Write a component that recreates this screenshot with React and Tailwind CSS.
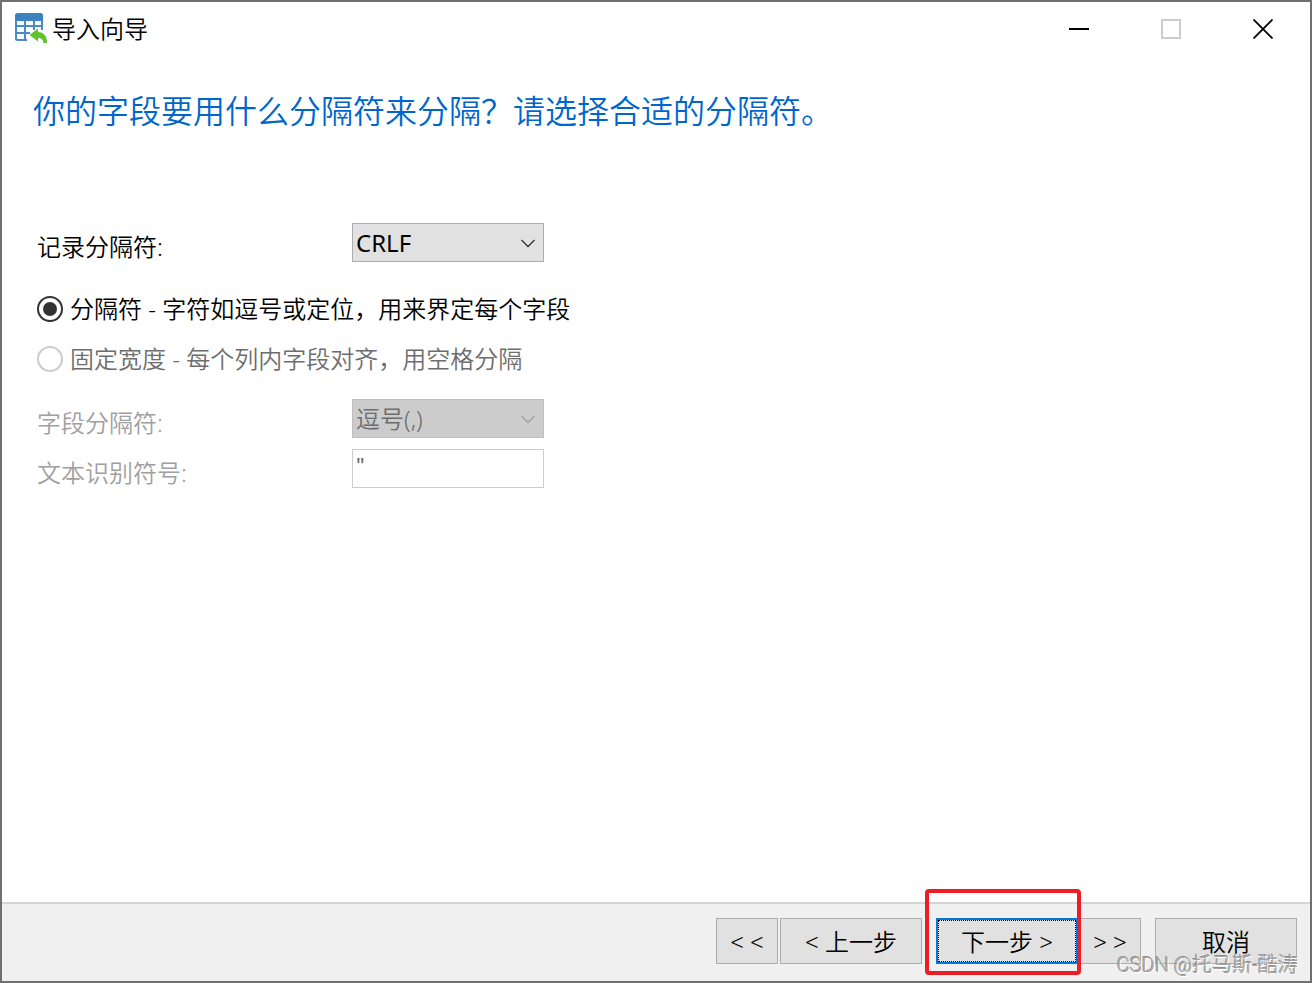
import React, { useState } from "react";

const TableImportIcon = () => (
  <svg width="32" height="32" viewBox="0 0 32 32" aria-hidden="true">
    <path d="M0 8V2.500Q0 0 2.500 0H25.500Q28 0 28 2.500V8Z" fill="#3c82c0" />
    <path
      d="M1 7V25.500Q1 27 2.500 27H12M27 7V17M10 7V27M19 7V17M1 13H27M1 20H15"
      fill="none"
      stroke="#4a8cc8"
      strokeWidth="2"
    />
    <path
      d="M14.500 22L23 15.500V19C29 19 32 23 32 30H28.500C28 26.500 26.500 25 23 25V28.500Z"
      fill="#62c22c"
    />
  </svg>
);

const Chevron = ({ className }) => (
  <svg
    className={`absolute right-2 top-4 pointer-events-none ${className}`}
    width="16"
    height="9"
    viewBox="0 0 16 9"
    fill="none"
    stroke="currentColor"
    strokeWidth="1.300"
    aria-hidden="true"
  >
    <path d="M1.500 1L8 7.500L14.500 1" />
  </svg>
);

const captionButton = "w-[92px] h-full flex items-center justify-center";
const wizardButton =
  "h-[46px] border border-[#adadad] bg-[#e1e1e1] pt-0.5 flex items-center justify-center whitespace-pre";

const App = () => {
  const [recordDelimiter, setRecordDelimiter] = useState("CRLF");
  const [mode, setMode] = useState("delimited");
  const locked = true;

  return (
    <div className="relative min-h-screen flex flex-col border-2 border-[#707070] bg-white text-black text-2xl leading-[30px] font-['Noto_Sans','Noto_Sans_CJK_SC',sans-serif] font-[350]">
      <header className="h-[54px] flex items-center pl-[13px] pr-px">
        <TableImportIcon />
        <h1 className="pl-[5px] grow">导入向导</h1>
        <button type="button" aria-label="最小化" className={captionButton}>
          <span className="w-5 h-0.5 bg-black" />
        </button>
        <button type="button" aria-label="最大化" disabled className={captionButton}>
          <span className="w-5 h-5 border-2 border-[#cccccc]" />
        </button>
        <button type="button" aria-label="关闭" className={captionButton}>
          <svg width="20" height="20" viewBox="0 0 20 20" stroke="#000" strokeWidth="1.800" aria-hidden="true">
            <path d="M0.500 0.500L19.500 19.500M19.500 0.500L0.500 19.500" />
          </svg>
        </button>
      </header>

      <main className="grow px-[35px] pt-[35px]">
        <h2 className="-ml-1 h-10 text-[32px] leading-10 text-[#0066cc]">
          你的字段要用什么分隔符来分隔？请选择合适的分隔符。
        </h2>

        <div className="mt-[92px] flex items-end">
          <label htmlFor="record" className="w-[315px]">记录分隔符:</label>
          <div className="relative w-48">
            <select
              id="record"
              value={recordDelimiter}
              onChange={(e) => setRecordDelimiter(e.target.value)}
              className="block w-full h-[39px] pl-[3px] appearance-none rounded-none border border-[#adadad] bg-[#e1e1e1] font-normal"
            >
              <option>CRLF</option>
            </select>
            <Chevron className="text-[#333333]" />
          </div>
        </div>

        <div className="mt-[22px] mb-[15px]">
          <label className="h-[50px] flex items-center gap-[7px]">
            <input
              type="radio"
              name="mode"
              checked={mode === "delimited"}
              onChange={() => setMode("delimited")}
              className="appearance-none w-[26px] h-[26px] rounded-full border-2 border-[#333333] bg-white p-1 bg-clip-content checked:bg-[#333333]"
            />
            分隔符 - 字符如逗号或定位，用来界定每个字段
          </label>
          <label className="h-[50px] flex items-center gap-[7px] text-[#6d6d6d]">
            <input
              type="radio"
              name="mode"
              disabled={locked}
              checked={mode === "fixed"}
              onChange={() => setMode("fixed")}
              className="appearance-none w-[26px] h-[26px] rounded-full border-2 border-[#cccccc] bg-white"
            />
            固定宽度 - 每个列内字段对齐，用空格分隔
          </label>
        </div>

        <div className="flex items-end text-[#a0a0a0]">
          <label htmlFor="field" className="w-[315px]">字段分隔符:</label>
          <div className="relative w-48">
            <select
              id="field"
              disabled={locked}
              className="block w-full h-[39px] pl-[3px] appearance-none rounded-none border border-[#bfbfbf] bg-[#cccccc] text-[#6d6d6d] opacity-100"
            >
              <option>逗号(,)</option>
            </select>
            <Chevron className="text-[#a0a0a0]" />
          </div>
        </div>

        <div className="mt-[11px] flex items-end text-[#a0a0a0]">
          <label htmlFor="qualifier" className="w-[315px]">文本识别符号:</label>
          <input
            id="qualifier"
            type="text"
            disabled={locked}
            defaultValue={'"'}
            className="w-48 h-[39px] px-[3px] pb-2 border border-[#cccccc] bg-white text-xl font-medium text-[#6d6d6d]"
          />
        </div>
      </main>

      <footer className="flex justify-end border-t-2 border-[#d5d5d5] bg-[#f0f0f0] pt-3.5 pb-[17px] pr-[13px]">
        <button type="button" className={`${wizardButton} w-[62px] mr-0.5`}>{"< <"}</button>
        <button type="button" className={`${wizardButton} w-[142px] mr-3.5`}>{"< 上一步"}</button>
        <div className="relative mr-px">
          <button
            type="button"
            className="w-[142px] h-[46px] border-2 border-[#0078d7] bg-[#e1e1e1] flex"
          >
            <span className="grow self-stretch pt-0.5 border border-dotted border-black flex items-center justify-center whitespace-pre">
              {"下一步 >"}
            </span>
          </button>
          <div className="absolute z-10 -top-[29px] -bottom-[11px] -left-[11px] -right-[3px] rounded-sm border-4 border-[#ee1c25] pointer-events-none" />
        </div>
        <button type="button" className={`${wizardButton} w-[62px] mr-3.5`}>{"> >"}</button>
        <button type="button" className={`${wizardButton} w-[142px]`}>取消</button>
      </footer>

      <div className="absolute right-3 bottom-0.5 text-xl leading-7 font-['Roboto','Noto_Sans_CJK_SC',sans-serif] font-light text-[#a3a3a3] [text-shadow:1px_1px_0_#ffffff,-1px_-1px_0_#8f8f8f] pointer-events-none">
        CSDN @托马斯-酷涛
      </div>
    </div>
  );
};

export default App;
